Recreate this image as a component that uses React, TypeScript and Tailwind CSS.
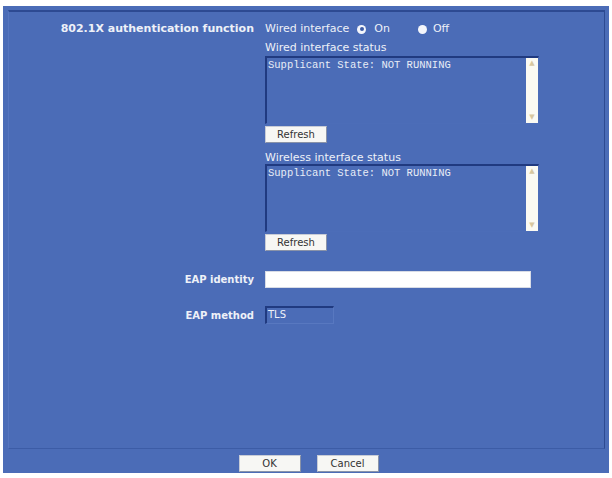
import React from "react";

const font = { fontFamily: '"DejaVu Sans", Verdana, sans-serif' };

function Radio({ checked }: { checked: boolean }) {
  return (
    <span className="inline-flex h-[9px] w-[9px] items-center justify-center rounded-full bg-[#f4f6fb]">
      {checked && <span className="h-[4px] w-[4px] rounded-full bg-[#3a5aa6]" />}
    </span>
  );
}

function StatusBox() {
  return (
    <div className="flex h-[68px] w-[274px] border-l-2 border-t-2 border-[#203a80] border-b border-r border-b-[#4c6db8] border-r-[#4c6db8]">
      <div
        className="flex-1 pl-[1px] pt-[1px] text-[10.5px] leading-[12px] text-[#e8ecf6]"
        style={{ fontFamily: '"Liberation Mono", "Courier New", monospace' }}
      >
        Supplicant State: NOT RUNNING
      </div>
      <div className="flex w-[12px] flex-col items-center justify-between bg-[#fbfaf2] py-[2px] text-[7px] leading-[7px] text-[#d8c8a0]">
        <span>▲</span>
        <span>▼</span>
      </div>
    </div>
  );
}

function Btn({ label, w }: { label: string; w: string }) {
  return (
    <button
      className={`${w} block h-[17px] border border-[#c8ccd6] border-b-[#8a93a8] border-r-[#8a93a8] bg-[#f7f7f4] text-[10px] leading-[15px] text-[#333]`}
      style={font}
    >
      {label}
    </button>
  );
}

export default function App() {
  return (
    <div className="h-[478px] w-[612px] bg-white pl-[3px] pt-[6px]" style={font}>
      <div className="flex h-[467px] w-[606px] flex-col bg-[#4b6cb7] pl-[5px] pr-[4px] pt-[4px]">
        <div className="flex h-[439px] flex-col border border-t-2 border-[#2d4a92] border-b-[#3c5ca6] border-l-[#5675bf] pt-[10px] text-[#eef1f8]">
          <div className="flex">
            <div className="w-[245px] text-right text-[11px] font-bold leading-[14px]">802.1X authentication function</div>
            <div className="ml-[11px] flex flex-col">
              <div className="flex items-center text-[11px] leading-[14px]">
                <span>Wired interface</span>
                <span className="ml-[8px] flex">
                  <Radio checked />
                </span>
                <span className="ml-[8px]">On</span>
                <span className="ml-[28px] flex">
                  <Radio checked={false} />
                </span>
                <span className="ml-[6px]">Off</span>
              </div>
              <div className="mt-[6px] text-[11px] leading-[12px]">Wired interface status</div>
              <div className="mt-[2px]">
                <StatusBox />
              </div>
              <div className="mt-[2px] flex">
                <Btn label="Refresh" w="w-[62px]" />
              </div>
              <div className="mt-[9px] text-[11px] leading-[12px]">Wireless interface status</div>
              <div>
                <StatusBox />
              </div>
              <div className="mt-[2px] flex">
                <Btn label="Refresh" w="w-[62px]" />
              </div>
            </div>
          </div>
          <div className="mt-[20px] flex items-center">
            <div className="w-[245px] text-right text-[10px] font-bold">EAP identity</div>
            <div className="ml-[11px] h-[17px] w-[266px] border border-[#d8dce6] bg-white" />
          </div>
          <div className="mt-[18px] flex items-center">
            <div className="w-[245px] text-right text-[10px] font-bold">EAP method</div>
            <div className="ml-[11px] h-[18px] w-[69px] border-l-2 border-t-2 border-[#203a80] border-b border-r border-b-[#5878c0] border-r-[#5878c0] pl-[1px] text-[10px] leading-[14px] text-[#eef1f8]">
              TLS
            </div>
          </div>
        </div>
        <div className="flex flex-1 items-start justify-center gap-[16px] pl-[4px] pt-[6px]">
          <Btn label="OK" w="w-[62px]" />
          <Btn label="Cancel" w="w-[62px]" />
        </div>
      </div>
    </div>
  );
}
